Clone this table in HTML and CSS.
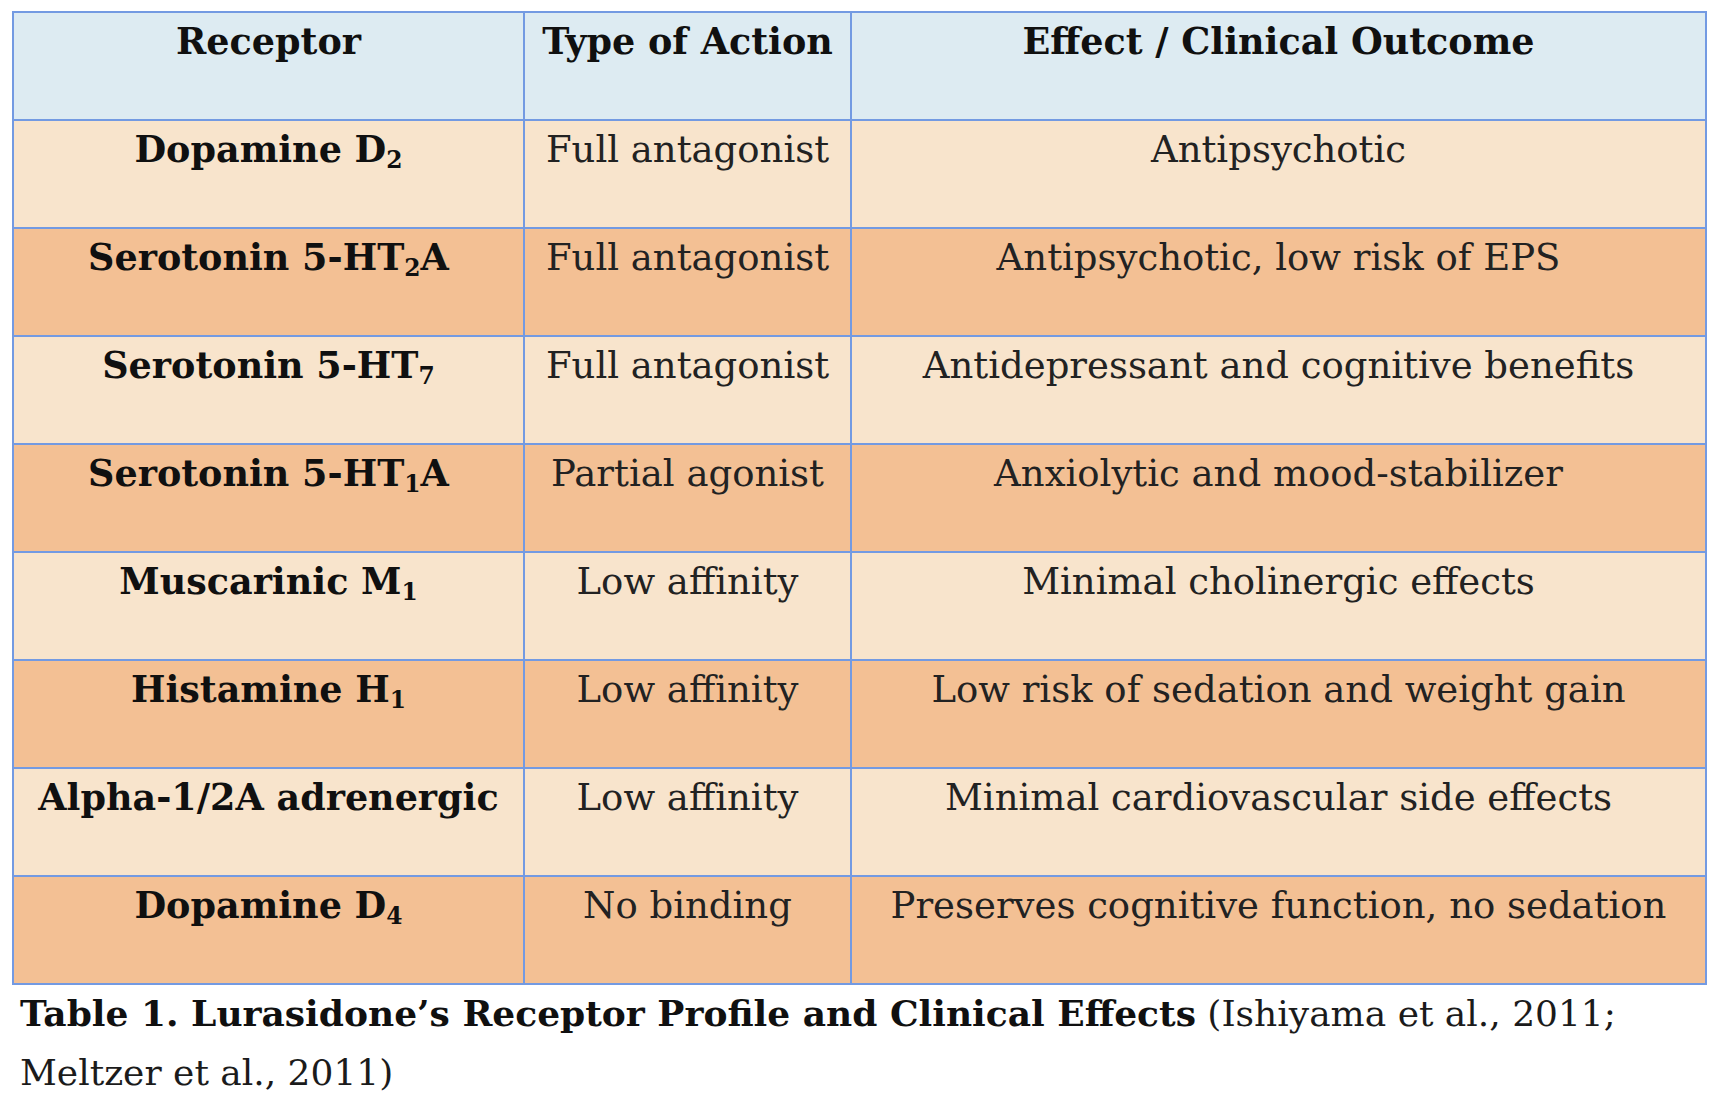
FILE: index.html
```html
<!DOCTYPE html>
<html lang="en">
<head>
<meta charset="utf-8">
<title>Table 1. Lurasidone's Receptor Profile and Clinical Effects</title>
<link rel="stylesheet" href="styles.css">
</head>
<body>
<div class="page">
  <table class="profile">
    <colgroup>
      <col class="c1"><col class="c2"><col class="c3">
    </colgroup>
    <thead>
      <tr class="head">
        <th>Receptor</th>
        <th>Type of Action</th>
        <th>Effect / Clinical Outcome</th>
      </tr>
    </thead>
    <tbody>
      <tr class="light">
        <th>Dopamine D<sub>2</sub></th>
        <td>Full antagonist</td>
        <td>Antipsychotic</td>
      </tr>
      <tr class="dark">
        <th>Serotonin 5-HT<sub>2</sub>A</th>
        <td>Full antagonist</td>
        <td>Antipsychotic, low risk of EPS</td>
      </tr>
      <tr class="light">
        <th>Serotonin 5-HT<sub>7</sub></th>
        <td>Full antagonist</td>
        <td>Antidepressant and cognitive benefits</td>
      </tr>
      <tr class="dark">
        <th>Serotonin 5-HT<sub>1</sub>A</th>
        <td>Partial agonist</td>
        <td>Anxiolytic and mood-stabilizer</td>
      </tr>
      <tr class="light">
        <th>Muscarinic M<sub>1</sub></th>
        <td>Low affinity</td>
        <td>Minimal cholinergic effects</td>
      </tr>
      <tr class="dark">
        <th>Histamine H<sub>1</sub></th>
        <td>Low affinity</td>
        <td>Low risk of sedation and weight gain</td>
      </tr>
      <tr class="light">
        <th>Alpha-1/2A adrenergic</th>
        <td>Low affinity</td>
        <td>Minimal cardiovascular side effects</td>
      </tr>
      <tr class="dark">
        <th>Dopamine D<sub>4</sub></th>
        <td>No binding</td>
        <td>Preserves cognitive function, no sedation</td>
      </tr>
    </tbody>
  </table>
  <p class="caption"><strong>Table 1. Lurasidone’s Receptor Profile and Clinical Effects</strong> (Ishiyama et al., 2011;<br>Meltzer et al., 2011)</p>
</div>
</body>
</html>
```

FILE: styles.css
```css
html, body {
  margin: 0;
  padding: 0;
  background: #ffffff;
}

body {
  font-family: "DejaVu Serif", "Liberation Serif", serif;
  color: #1b1b1b;
}

.page {
  padding: 11px 0 0 12px;
}

.profile {
  border-collapse: collapse;
  width: 1695px;
  table-layout: fixed;
}

.c1 { width: 511px; }
.c2 { width: 327px; }
.c3 { width: auto; }

.profile th,
.profile td {
  border: 2px solid #739ae2;
  height: 108px;
  box-sizing: border-box;
  padding: 8px 2px 0;
  vertical-align: top;
  text-align: center;
  line-height: 42px;
  white-space: nowrap;
}

.profile th {
  font-size: 36.5px;
  font-weight: bold;
  color: #101010;
}

.profile td {
  font-size: 37px;
  font-weight: normal;
  color: #222222;
}

.head th {
  background: #ddebf2;
}

.light th, .light td {
  background: #f8e4cc;
}

.dark th, .dark td {
  background: #f3c094;
}

.profile sub {
  font-size: 0.64em;
  line-height: 0;
  vertical-align: -0.26em;
}

.caption {
  margin: -1px 0 0 8px;
  font-size: 36px;
  line-height: 59px;
  color: #1b1b1b;
  white-space: nowrap;
}

.caption strong {
  font-weight: bold;
  color: #101010;
}
```
